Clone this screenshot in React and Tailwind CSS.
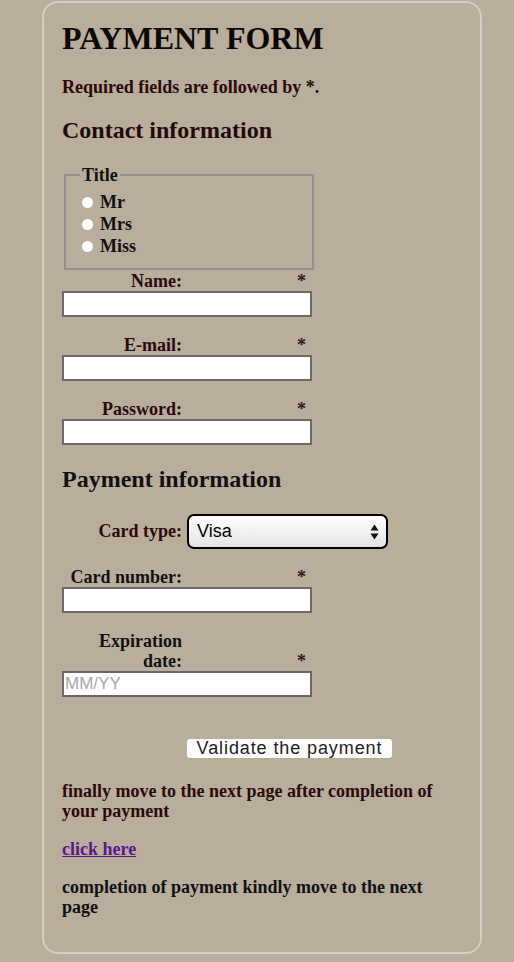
import React from "react";

const serif = { fontFamily: '"Liberation Serif", "Times New Roman", serif' };

function FieldLabel({ children, color = "text-[#2b0a0a]" }) {
  return (
    <div className="flex w-[250px] items-end justify-between">
      <span className={`w-[120px] text-right text-[18px] leading-[20px] font-bold ${color}`}>{children}</span>
      <span className="mr-[6px] text-[18px] leading-[20px] font-bold text-[#2a1a1a]">*</span>
    </div>
  );
}

function TextInput({ placeholder }) {
  return (
    <input
      type="text"
      placeholder={placeholder}
      className="block h-[26px] w-[250px] border-2 border-[#6e6767] bg-white px-[1px] text-[17px] outline-none placeholder:text-[#a8a8a8]"
      style={{ fontFamily: '"Liberation Sans", Arial, sans-serif' }}
    />
  );
}

function Radio({ label }) {
  return (
    <label className="flex h-[22px] items-center gap-[7px]">
      <input type="radio" name="title" className="h-[11px] w-[11px] appearance-none rounded-full bg-white" />
      <span className="text-[18px] leading-[22px] font-bold text-[#111]">{label}</span>
    </label>
  );
}

export default function App() {
  return (
    <div className="min-h-[962px] w-full bg-[#b9ad9b] pt-[1px]" style={serif}>
      <div className="ml-[42px] w-[440px] rounded-[16px] border-2 border-[#d3cec7] px-[18px] pb-[35px]">
        <h1 className="mt-[17px] text-[32px] leading-[36px] font-bold text-[#0d0806]">PAYMENT FORM</h1>
        <p className="mt-[21px] text-[18px] leading-[20px] font-bold text-[#2b0a0a]">Required fields are followed by *.</p>

        <h2 className="mt-[19px] text-[24px] leading-[28px] font-bold text-[#230a0a]">Contact information</h2>

        <fieldset className="mt-[21px] ml-[2px] w-[250px] border-2 border-[#939090] px-[14px] pb-[11px]">
          <legend className="px-[2px] text-[18px] leading-[20px] font-bold text-[#111]">Title</legend>
          <div className="mt-[6px] ml-[2px] flex flex-col">
            <Radio label="Mr" />
            <Radio label="Mrs" />
            <Radio label="Miss" />
          </div>
        </fieldset>

        <div className="mt-[1px]">
          <FieldLabel>Name:</FieldLabel>
          <TextInput />
        </div>
        <div className="mt-[18px]">
          <FieldLabel>E-mail:</FieldLabel>
          <TextInput />
        </div>
        <div className="mt-[18px]">
          <FieldLabel>Password:</FieldLabel>
          <TextInput />
        </div>

        <h2 className="mt-[20px] text-[24px] leading-[28px] font-bold text-[#111]">Payment information</h2>

        <div className="mt-[21px] flex items-center gap-[5px]">
          <span className="w-[120px] text-right text-[18px] leading-[35px] font-bold text-[#2b0a0a]">Card type:</span>
          <div
            className="relative flex h-[35px] w-[201px] items-center rounded-[7px] border-2 border-black bg-gradient-to-b from-white to-[#e4e4e4] pl-[8px] text-[18px] text-black"
            style={{ fontFamily: '"Liberation Sans", Arial, sans-serif' }}
          >
            Visa
            <svg className="absolute right-[7px] top-[8px]" width="9" height="16" viewBox="0 0 9 16">
              <path d="M4.5 0.5 L8.5 6.5 L0.5 6.5 Z" fill="#111" />
              <path d="M4.5 15.5 L8.5 9.5 L0.5 9.5 Z" fill="#111" />
            </svg>
          </div>
        </div>

        <div className="mt-[18px]">
          <FieldLabel color="text-[#111]">Card number:</FieldLabel>
          <TextInput />
        </div>
        <div className="mt-[18px]">
          <FieldLabel color="text-[#111]">
            Expiration
            <br />
            date:
          </FieldLabel>
          <TextInput placeholder="MM/YY" />
        </div>

        <button
          type="button"
          className="mt-[42px] ml-[125px] flex h-[19px] w-[205px] items-center justify-center rounded-[3px] bg-white text-[18px] leading-[19px] tracking-[0.9px] text-[#222]"
          style={{ fontFamily: '"Liberation Sans", Arial, sans-serif' }}
        >
          Validate the payment
        </button>

        <p className="mt-[23px] text-[18px] leading-[20px] font-bold text-[#2b0a0a]">
          finally move to the next page after completion of your payment
        </p>
        <p className="mt-[18px] text-[18px] leading-[20px] font-bold">
          <a href="#" className="text-[#551a8b] underline">click here</a>
        </p>
        <p className="mt-[18px] w-[380px] text-[18px] leading-[20px] font-bold text-[#111]">
          completion of payment kindly move to the next page
        </p>
      </div>
    </div>
  );
}
